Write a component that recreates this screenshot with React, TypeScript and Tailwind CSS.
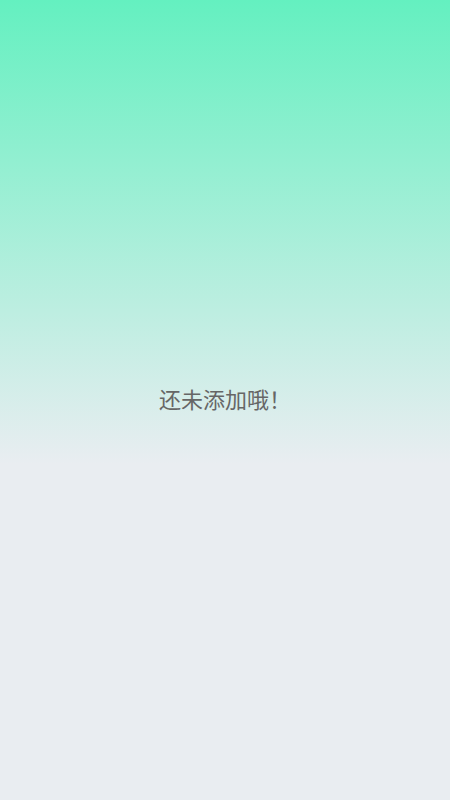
import React from "react";

const App = () => {
  return (
    <div className="h-[800px] w-full bg-[linear-gradient(to_bottom,#64f0c0_0%,#e9edf1_58%,#e9edf1_100%)] flex items-center justify-center pb-[5px]">
      <p className="text-[22px] leading-[30px] text-[#666666] font-['Noto_Sans_CJK_SC',sans-serif]">
        还未添加哦！
      </p>
    </div>
  );
};

export default App;
